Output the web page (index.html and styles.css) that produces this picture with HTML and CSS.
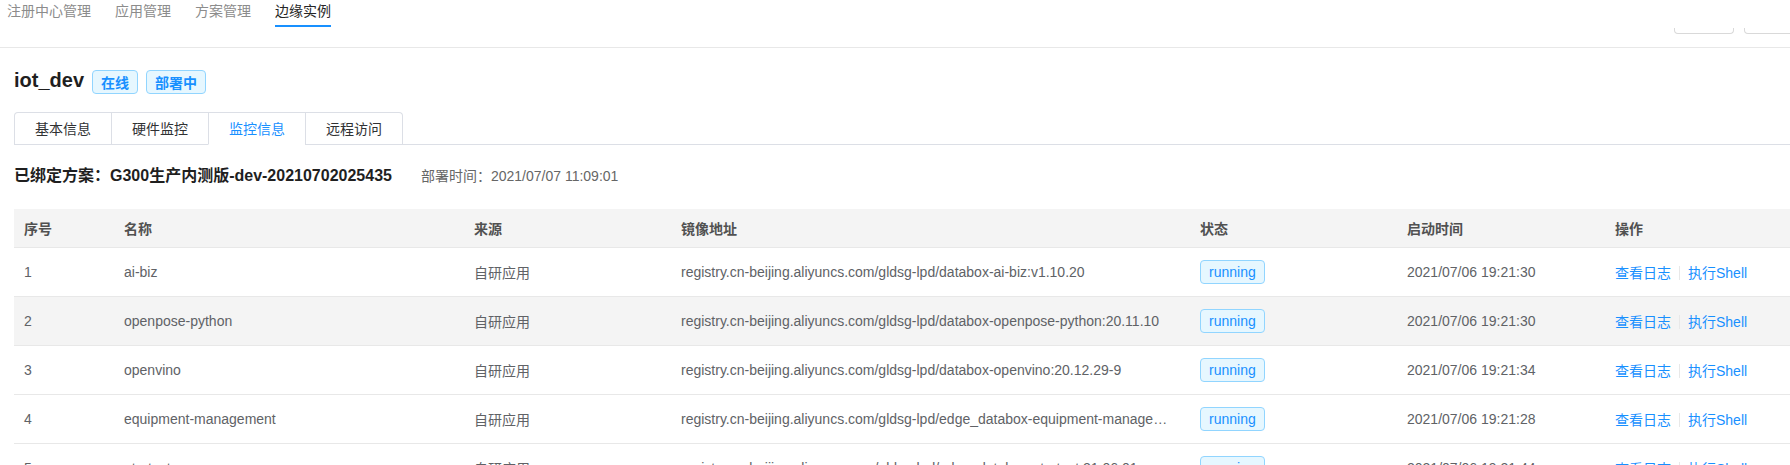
FILE: index.html
```html
<!DOCTYPE html>
<html lang="zh-CN">
<head>
<meta charset="utf-8">
<title>边缘实例 - iot_dev</title>
<link rel="stylesheet" href="styles.css">
</head>
<body>
<header class="topbar">
  <nav class="topnav">
    <a class="nav-item">注册中心管理</a>
    <a class="nav-item">应用管理</a>
    <a class="nav-item">方案管理</a>
    <a class="nav-item active">边缘实例</a>
  </nav>
  <div class="top-actions">
    <span class="ghost-btn"></span>
    <span class="ghost-btn"></span>
  </div>
</header>

<main class="content">
  <div class="title-row">
    <h1 class="title">iot_dev</h1>
    <span class="tag">在线</span>
    <span class="tag">部署中</span>
  </div>

  <div class="tabs">
    <div class="tab-nav">
      <div class="tab">基本信息</div>
      <div class="tab">硬件监控</div>
      <div class="tab active">监控信息</div>
      <div class="tab">远程访问</div>
    </div>
  </div>

  <div class="bound">
    <span class="bound-name">已绑定方案：G300生产内测版-dev-20210702025435</span>
    <span class="bound-time">部署时间：2021/07/07 11:09:01</span>
  </div>

  <table class="grid">
    <colgroup>
      <col class="c-no"><col class="c-name"><col class="c-src"><col class="c-img"><col class="c-status"><col class="c-time"><col>
    </colgroup>
    <thead>
      <tr><th>序号</th><th>名称</th><th>来源</th><th>镜像地址</th><th>状态</th><th>启动时间</th><th>操作</th></tr>
    </thead>
    <tbody>
      <tr>
        <td>1</td><td>ai-biz</td><td>自研应用</td>
        <td class="ellip">registry.cn-beijing.aliyuncs.com/gldsg-lpd/databox-ai-biz:v1.10.20</td>
        <td><span class="status">running</span></td><td>2021/07/06 19:21:30</td>
        <td><a class="link">查看日志</a><span class="sep"></span><a class="link">执行Shell</a></td>
      </tr>
      <tr class="hl">
        <td>2</td><td>openpose-python</td><td>自研应用</td>
        <td class="ellip">registry.cn-beijing.aliyuncs.com/gldsg-lpd/databox-openpose-python:20.11.10</td>
        <td><span class="status">running</span></td><td>2021/07/06 19:21:30</td>
        <td><a class="link">查看日志</a><span class="sep"></span><a class="link">执行Shell</a></td>
      </tr>
      <tr>
        <td>3</td><td>openvino</td><td>自研应用</td>
        <td class="ellip">registry.cn-beijing.aliyuncs.com/gldsg-lpd/databox-openvino:20.12.29-9</td>
        <td><span class="status">running</span></td><td>2021/07/06 19:21:34</td>
        <td><a class="link">查看日志</a><span class="sep"></span><a class="link">执行Shell</a></td>
      </tr>
      <tr>
        <td>4</td><td>equipment-management</td><td>自研应用</td>
        <td class="ellip">registry.cn-beijing.aliyuncs.com/gldsg-lpd/edge_databox-equipment-management:21.06.30</td>
        <td><span class="status">running</span></td><td>2021/07/06 19:21:28</td>
        <td><a class="link">查看日志</a><span class="sep"></span><a class="link">执行Shell</a></td>
      </tr>
      <tr>
        <td>5</td><td>ota-test</td><td>自研应用</td>
        <td class="ellip">registry.cn-beijing.aliyuncs.com/gldsg-lpd/edge_databox-ota-test:21.06.01</td>
        <td><span class="status">running</span></td><td>2021/07/06 19:21:44</td>
        <td><a class="link">查看日志</a><span class="sep"></span><a class="link">执行Shell</a></td>
      </tr>
    </tbody>
  </table>
</main>
</body>
</html>
```

FILE: styles.css
```css
html, body {
  margin: 0;
  padding: 0;
  overflow: hidden;
  background: #fff;
  font-family: "Liberation Sans", "Noto Sans CJK SC", sans-serif;
  font-size: 14px;
  color: #606266;
}

.topbar {
  display: flex;
  justify-content: space-between;
  align-items: flex-start;
  height: 47px;
  border-bottom: 1px solid #e8e8e8;
  padding-left: 7px;
}

.topnav {
  display: flex;
  gap: 24px;
}

.nav-item {
  display: block;
  line-height: 21px;
  height: 25px;
  border-bottom: 2px solid transparent;
  color: #8c8c8c;
  font-family: "Noto Sans CJK SC", sans-serif;
}

.nav-item.active {
  color: #262626;
  border-bottom-color: #1890ff;
}

.top-actions {
  display: flex;
  gap: 10px;
  margin-top: 28px;
  margin-right: -14px;
}

.ghost-btn {
  display: block;
  width: 58px;
  height: 5px;
  border: 1px solid #d9d9d9;
  border-top: none;
  border-radius: 0 0 4px 4px;
}

.content {
  padding-left: 14px;
}

.title-row {
  display: flex;
  align-items: center;
  gap: 8px;
  margin-top: 22px;
}

.title {
  margin: 0;
  font-size: 20px;
  line-height: 24px;
  font-weight: bold;
  color: #1f1f1f;
  position: relative;
  top: -2px;
}

.tag {
  display: inline-block;
  padding: 0 8px;
  line-height: 22px;
  border: 1px solid #91d5ff;
  border-radius: 4px;
  background: #e6f7ff;
  color: #1890ff;
  font-weight: bold;
  font-family: "Noto Sans CJK SC", sans-serif;
}

.tabs {
  margin-top: 18px;
  border-bottom: 1px solid #dcdfe6;
  display: flex;
}

.tab-nav {
  display: flex;
  border: 1px solid #dcdfe6;
  border-bottom: none;
  border-radius: 4px 4px 0 0;
  margin-bottom: -1px;
}

.tab {
  padding: 0 20px;
  height: 31px;
  line-height: 30px;
  border-left: 1px solid #dcdfe6;
  border-bottom: 1px solid #dcdfe6;
  color: #303133;
  font-family: "Noto Sans CJK SC", sans-serif;
}

.tab:first-child {
  border-left: none;
}

.tab.active {
  color: #1890ff;
  border-bottom-color: #fff;
}

.bound {
  display: flex;
  align-items: baseline;
  gap: 29px;
  margin-top: 19px;
  line-height: 24px;
}

.bound-name {
  font-size: 16px;
  font-weight: bold;
  color: #1f1f1f;
}

.bound-time {
  color: #666;
}

.grid {
  width: 100%;
  margin-top: 21px;
  border-collapse: collapse;
  table-layout: fixed;
}

.c-no { width: 100px; }
.c-name { width: 350px; }
.c-src { width: 207px; }
.c-img { width: 519px; }
.c-status { width: 207px; }
.c-time { width: 208px; }

.grid th {
  height: 38px;
  padding: 0 10px;
  background: #f4f4f4;
  text-align: left;
  font-weight: bold;
  color: #515151;
  border-bottom: 1px solid #e8e8e8;
}

.grid td {
  height: 48px;
  padding: 0 10px;
  border-bottom: 1px solid #e8e8e8;
  color: #606266;
  white-space: nowrap;
}

.grid tr.hl td {
  background: #f4f4f4;
}

.grid td.ellip {
  overflow: hidden;
  text-overflow: ellipsis;
  padding-right: 16px;
}

.status {
  display: inline-block;
  padding: 0 8px;
  line-height: 22px;
  border: 1px solid #91d5ff;
  border-radius: 4px;
  background: #e6f7ff;
  color: #1890ff;
}

.link {
  color: #1890ff;
}

.sep {
  display: inline-block;
  width: 1px;
  height: 14px;
  margin: 0 8px;
  background: #e8e8e8;
  vertical-align: -2px;
}
```
